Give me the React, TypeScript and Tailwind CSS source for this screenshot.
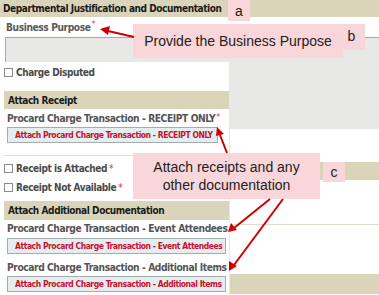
import React from 'react';

const tan = 'bg-[#dad4bb]';

const Checkbox: React.FC<{ label: string; required?: boolean }> = ({ label, required }) => (
  <div className="flex items-center h-[19px] pl-[4px]">
    <span className="w-[9px] h-[9px] border border-[#8a8a8a] bg-white shrink-0" />
    <span className="ml-[3px] text-[10px] font-bold text-[#4a4a4a]">{label}</span>
    {required && <span className="ml-[2px] text-[10px] text-[#e0304a]">*</span>}
  </div>
);

const AttachButton: React.FC<{ label: string; width: string }> = ({ label, width }) => (
  <div className={`ml-[7px] h-[16px] ${width} border border-[#a4acac] bg-[#e4eef0] flex items-center pl-[7px]`}>
    <span className="text-[8.5px] font-bold text-[#c8102e] whitespace-nowrap tracking-[-0.45px]">{label}</span>
  </div>
);

const FieldLabel: React.FC<{ label: string; required?: boolean }> = ({ label, required }) => (
  <div className="pl-[7px] h-[14px] flex items-center">
    <span className="text-[10.2px] font-bold text-[#555555] whitespace-nowrap">{label}</span>
    {required && <span className="ml-[1px] -mt-[3px] text-[9px] text-[#ee3355]">*</span>}
  </div>
);

const Callout: React.FC<{ className: string; children: React.ReactNode }> = ({ className, children }) => (
  <div
    className={`absolute bg-[#f9d6da] flex items-center justify-center text-center text-[14px] leading-[18px] tracking-normal text-[#222] font-stretch-normal ${className}`}
    style={{ fontFamily: '"Liberation Sans", Arial, sans-serif' }}
  >
    {children}
  </div>
);

export default function App() {
  return (
    <div
      className="relative w-[379px] h-[295px] overflow-hidden bg-white font-stretch-condensed tracking-[-0.42px]"
      style={{ fontFamily: '"DejaVu Sans", Verdana, sans-serif' }}
    >
      {/* background form */}
      <div className={`h-[17px] ${tan} flex items-center pl-[3px]`}>
        <span className="text-[10px] font-bold text-[#1a1a1a] whitespace-nowrap">
          Departmental Justification and Documentation
        </span>
      </div>
      <div className="h-[20px] flex items-end pl-[6px] pb-[2px]">
        <span className="text-[10.2px] font-bold text-[#5a5a5a]">Business Purpose</span>
        <span className="ml-[1px] mb-[4px] text-[9px] text-[#ee3355]">*</span>
      </div>
      <div className="ml-[5px] h-[92px] border-t border-l border-[#a8a8a8] bg-[#e8e8e6]" />
      <div className="h-[33px]" />
      <div className={`h-[18px] ${tan}`} />
      <div className="h-[45px] border-b border-[#e2ddca]" />
      <div className="h-[49px]" />
      <div className={`h-[20px] ${tan}`} />

      {/* overlay panel */}
      <div className="absolute left-0 top-[62px] w-[230px] h-[233px] bg-white border-r border-[#e3e9f0]">
        <div className="pt-[1px]">
          <Checkbox label="Charge Disputed" />
        </div>
        <div className={`mt-[9px] ml-[4px] h-[18px] ${tan} flex items-center pl-[4px]`}>
          <span className="text-[10px] font-bold text-[#1a1a1a]">Attach Receipt</span>
        </div>
        <div className="mt-[3px]">
          <FieldLabel label="Procard Charge Transaction - RECEIPT ONLY" required />
        </div>
        <div className="mt-[1px]">
          <AttachButton label="Attach Procard Charge Transaction - RECEIPT ONLY" width="w-[211px]" />
        </div>
        <div className="mt-[12px] ml-[4px] border-t border-[#e0e0e0]" />
        <div className="mt-[3px]">
          <Checkbox label="Receipt is Attached" required />
          <Checkbox label="Receipt Not Available" required />
        </div>
        <div className={`mt-[4px] ml-[4px] h-[19px] ${tan} flex items-center pl-[4px]`}>
          <span className="text-[10px] font-bold text-[#1a1a1a]">Attach Additional Documentation</span>
        </div>
        <div className="mt-[2px]">
          <FieldLabel label="Procard Charge Transaction - Event Attendees" />
        </div>
        <div className="mt-[2px]">
          <AttachButton label="Attach Procard Charge Transaction - Event Attendees" width="w-[219px]" />
        </div>
        <div className="mt-[7px]">
          <FieldLabel label="Procard Charge Transaction - Additional Items" />
        </div>
        <div className="mt-[1px]">
          <AttachButton label="Attach Procard Charge Transaction - Additional Items" width="w-[219px]" />
        </div>
      </div>

      {/* annotation labels */}
      <Callout className="left-[228px] top-0 w-[22px] h-[21px]">a</Callout>
      <Callout className="left-[338px] top-[24px] w-[27px] h-[26px] !items-start pt-[3px]">b</Callout>
      <Callout className="left-[133px] top-[24px] w-[210px] h-[34px]">Provide the Business Purpose</Callout>
      <Callout className="left-[323px] top-[162px] w-[22px] h-[20px]">c</Callout>
      <Callout className="left-[133px] top-[153px] w-[187px] h-[46px]">
        Attach receipts and any
        <br />
        other documentation
      </Callout>

      {/* arrows */}
      <svg className="absolute inset-0 pointer-events-none" width="379" height="295" viewBox="0 0 379 295">
        <g stroke="#cc0000" strokeWidth="2" fill="none">
          <line x1="134" y1="37" x2="108" y2="31" />
          <line x1="227" y1="153" x2="220" y2="135" />
          <line x1="270" y1="199" x2="234" y2="228" />
          <line x1="283" y1="199" x2="234" y2="265" />
        </g>
        <g fill="#cc0000">
          <polygon points="100,29 110,26 108,35" />
          <polygon points="217,127 224,134 216,136" />
          <polygon points="228,232 231,223 237,230" />
          <polygon points="229,271 229,261 237,266" />
        </g>
      </svg>
    </div>
  );
}
